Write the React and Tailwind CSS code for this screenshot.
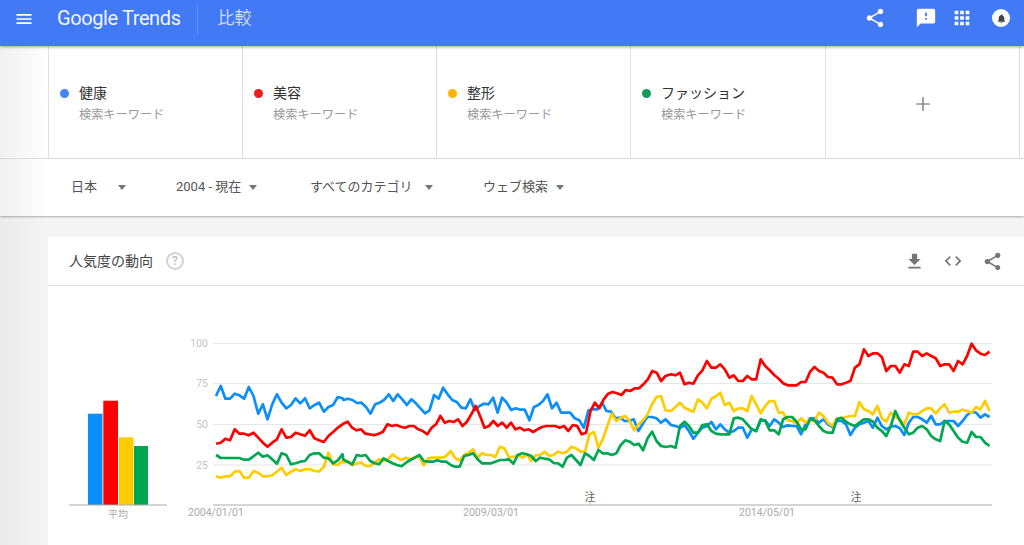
import React from "react";
import { Plus } from "lucide-react";

const FONT = "font-['Roboto','Noto_Sans_CJK_JP',sans-serif]";

// Material icon paths
const ICONS = {
  share: "M18 16.08c-.76 0-1.44.3-1.96.77L8.91 12.7c.05-.23.09-.46.09-.7s-.04-.47-.09-.7l7.05-4.11c.54.5 1.25.81 2.04.81 1.66 0 3-1.34 3-3s-1.34-3-3-3-3 1.34-3 3c0 .24.04.47.09.7L8.04 9.81C7.5 9.31 6.79 9 6 9c-1.66 0-3 1.34-3 3s1.34 3 3 3c.79 0 1.5-.31 2.04-.81l7.12 4.16c-.05.21-.08.43-.08.65 0 1.61 1.31 2.92 2.92 2.92 1.61 0 2.92-1.31 2.92-2.92s-1.31-2.92-2.92-2.92z",
  feedback: "M20 2H4c-1.1 0-1.99.9-1.99 2L2 22l4-4h14c1.1 0 2-.9 2-2V4c0-1.1-.9-2-2-2zm-7 12h-2v-2h2v2zm0-4h-2V6h2v4z",
  apps: "M4 8h4V4H4v4zm6 12h4v-4h-4v4zm-6 0h4v-4H4v4zm0-6h4v-4H4v4zm6 0h4v-4h-4v4zm6-10v4h4V4h-4zm-6 4h4V4h-4v4zm6 6h4v-4h-4v4zm0 6h4v-4h-4v4z",
  bell: "M12 22c1.1 0 2-.9 2-2h-4c0 1.1.89 2 2 2zm6-6v-5c0-3.07-1.64-5.64-4.5-6.32V4c0-.83-.67-1.5-1.5-1.5s-1.5.67-1.5 1.5v.68C7.63 5.36 6 7.92 6 11v5l-2 2v1h16v-1l-2-2z",
  menu: "M3 18h18v-2H3v2zm0-5h18v-2H3v2zm0-7v2h18V6H3z",
  download: "M19 9h-4V3H9v6H5l7 7 7-7zM5 18v2h14v-2H5z",
  code: "M9.4 16.6L4.8 12l4.6-4.6L8 6l-6 6 6 6 1.4-1.4zm5.2 0l4.6-4.6-4.6-4.6L16 6l6 6-6 6-1.4-1.4z",
};

const Icon = ({ name, className }) => (
  <svg viewBox="0 0 24 24" fill="currentColor" className={className}>
    <path d={ICONS[name]} />
  </svg>
);

// y values were read off 3x crops, three panels per series (y = 330 + v / 3)
const PANELS = [
  [216, 342.5],
  [343.3, 665.5],
  [671, 989.5],
];

const SERIES = [
  {
    color: "#0a8ffa",
    data: [
      [195,165,203,203,188,193,203,168,195,248,220,265,220,190,215,232,222,202,217,202,232,222,215,242,228,222,198,202],
      [207,203,207,216,215,228,248,220,215,207,190,210,190,205,222,205,217,232,247,238,192,203,170,190,207,213,230,232,205,238,225,218,220,200,245,200,215,237,232,236,236,268,228,222,210,190,232,215,245,245,245,262,268,290,238,235,235,215,240,242,262,260,270,270,265,300,278,258,258,262,275,265],
      [282,285,290,283,300,323,305,290,285,273,295,280,295,305,300,290,290,320,295,300,268,268,285,265,275,288,283,285,285,310,280,262,262,275,265,280,288,270,270,280,312,290,280,275,270,290,260,285,295,287,285,292,312,275,258,258,265,275,255,280,280,270,270,270,285,270,252,243,245,260,250,258],
    ],
  },
  {
    color: "#ff0000",
    data: [
      [338,335,323,328,295,308,308,313,305,320,335,347,335,325,295,320,318,305,310,314,298,322,328,333,315,303,290,280],
      [278,272,290,298,295,308,310,313,308,302,280,285,282,287,290,285,285,295,300,310,290,280,255,275,270,273,265,285,272,250,225,255,290,285,270,285,275,290,275,295,290,298,295,303,295,288,285,285,285,290,285,300,282,285,310,305,240,215,232,205,188,183,187,192,177,180,172,172,160,145,120,125,150,135],
      [130,133,125,160,155,158,133,118,90,110,110,100,115,140,133,150,150,135,145,145,85,105,118,132,143,157,163,163,163,153,153,122,108,120,125,138,140,160,160,155,150,110,100,55,75,67,67,78,120,105,105,125,100,105,62,62,75,67,75,82,105,100,100,120,90,100,75,38,58,68,72,62],
    ],
  },
  {
    color: "#ffcc00",
    data: [
      [436,440,436,436,422,420,440,441,420,425,436,436,433,422,410,432,422,415,420,415,414,420,421,408,365,400,402,390],
      [395,390,403,397,395,405,405,395,385,390,385,370,380,387,380,385,378,378,403,382,380,380,380,375,360,382,388,372,365,355,380,367,372,372,378,347,352,378,378,372,380,370,390,373,372,362,375,372,362,367,362,347,352,362,362,310,303,350,325,285,248,270,260,255,270,298,280,268,250,220,198,195,238],
      [240,228,215,230,236,242,205,215,232,203,196,185,222,215,240,232,232,240,195,220,247,225,210,210,245,245,268,270,278,262,275,265,270,245,255,275,285,262,262,258,255,255,213,235,240,250,225,262,272,245,258,265,280,245,250,250,240,232,232,247,232,220,245,242,242,236,240,245,228,235,210,240],
    ],
  },
  {
    color: "#00a650",
    data: [
      [372,381,381,381,381,381,386,386,376,365,377,373,385,398,367,372,400,397,392,390,372,367,367,380,382,397,388,370],
      [385,393,400,372,375,372,390,397,400,382,390,397,402,406,395,387,380,372,390,392,392,388,392,392,402,407,407,375,372,367,385,397,397,397,392,387,387,385,398,372,367,370,375,390,380,383,385,396,397,407,380,372,387,402,367,375,387,357,367,367,372,367,342,328,332,342,338,358,322,302,330,345,348],
      [345,350,285,272,285,305,305,282,280,300,308,310,310,310,262,260,265,280,295,300,265,270,298,298,310,265,258,258,272,295,295,265,268,285,300,305,305,265,260,272,280,285,275,265,265,272,290,300,315,285,240,268,290,310,305,290,285,295,315,325,330,270,280,300,320,332,335,303,318,318,335,345],
    ],
  },
];

const toPoints = (panels) =>
  panels
    .flatMap((ys, p) => {
      const [x0, x1] = PANELS[p];
      return ys.map((v, i) => {
        const x = x0 + ((x1 - x0) * i) / (ys.length - 1);
        return `${x.toFixed(1)},${(330 + v / 3).toFixed(1)}`;
      });
    })
    .join(" ");

const TERMS = [
  { name: "健康", dot: "bg-[#4285f4]", w: "w-[194px]" },
  { name: "美容", dot: "bg-[#ea1c1c]", w: "w-[194px]" },
  { name: "整形", dot: "bg-[#fbb400]", w: "w-[194px]" },
  { name: "ファッション", dot: "bg-[#0f9d58]", w: "w-[195px]" },
];

const FILTERS = [
  { label: "日本", w: "w-[105px]", gap: "ml-[21px]" },
  { label: "2004 - 現在", w: "w-[134px]", gap: "ml-[8px]" },
  { label: "すべてのカテゴリ", w: "w-[173px]", gap: "ml-[12px]" },
  { label: "ウェブ検索", w: "", gap: "ml-[8px]" },
];

const Header = () => (
  <header className="relative z-20 flex h-[46px] items-center bg-[#4279f5] text-white shadow-[0_1px_3px_rgba(0,0,0,0.35)]">
    <Icon name="menu" className="ml-[14px] h-5 w-5 -translate-y-[4px]" />
    <span className="ml-[23px] -translate-y-[5px] text-[20px] font-normal tracking-[-0.4px] text-white/95">Google Trends</span>
    <div className="ml-[16px] h-[29px] w-px -translate-y-[4px] bg-white/20" />
    <span className="ml-[20px] -translate-y-[4px] text-[17px] text-white/75">比較</span>
    <div className="ml-auto flex -translate-y-[5px] items-center pr-[14px]">
      <Icon name="share" className="h-[22px] w-[22px]" />
      <Icon name="feedback" className="ml-[29px] h-[22px] w-[22px]" />
      <Icon name="apps" className="ml-[14px] h-[22px] w-[22px]" />
      <div className="ml-[19px] flex h-[18px] w-[18px] items-center justify-center rounded-full bg-white">
        <Icon name="bell" className="h-[11px] w-[11px] text-[#444]" />
      </div>
    </div>
  </header>
);

const TermsRow = () => (
  <div className="flex h-[113px] border-b border-[#e0e0e0] bg-linear-to-r from-[#f1f1f1] to-white to-[48px] pl-[48px]">
    {TERMS.map((t) => (
      <div key={t.name} className={`flex ${t.w} flex-col border-l border-[#e0e0e0] bg-white pl-[11px] pt-[37px]`}>
        <div className="flex items-center gap-[10px] leading-[20px] text-[14px] text-[#333]">
          <span className={`h-[9px] w-[9px] rounded-full ${t.dot}`} />
          {t.name}
        </div>
        <div className="mt-[3px] pl-[19px] text-[12.2px] leading-[18px] text-[#999]">検索キーワード</div>
      </div>
    ))}
    <div className="flex w-[195px] items-center justify-center border-x border-[#e0e0e0] bg-white pt-[3px]">
      <Plus className="h-[22px] w-[22px] text-[#666]" strokeWidth={1.3} />
    </div>
    <div className="flex-1 bg-white" />
  </div>
);

const FiltersRow = () => (
  <div className="relative z-10 flex h-[57px] items-center bg-linear-to-r from-[#f1f1f1] to-white to-[48px] pb-[1px] pl-[71px] text-[13px] text-[#555] shadow-[0_1px_2px_rgba(0,0,0,0.3)]">
    {FILTERS.map((f) => (
      <div key={f.label} className={`flex items-center ${f.w}`}>
        <span>{f.label}</span>
        <span className={`${f.gap} h-0 w-0 border-x-[4px] border-t-[5px] border-x-transparent border-t-[#757575]`} />
      </div>
    ))}
  </div>
);

const BarChart = () => (
  <svg width="119" height="215" viewBox="69 330 119 215" className="shrink-0">
    <rect x="88" y="412.7" width="14.5" height="91.3" fill="#0a8ffa" />
    <rect x="103.3" y="399.7" width="14.7" height="104.3" fill="#ff0000" />
    <rect x="119" y="436.3" width="14.5" height="67.7" fill="#ffcc00" />
    <rect x="134" y="445" width="14" height="59" fill="#00a650" />
    <line x1="69" x2="167" y1="504" y2="504" stroke="#aaaaaa" />
    <text x="118" y="517" textAnchor="middle" fontSize="10" fill="#aaaaaa">平均</text>
  </svg>
);

const LineChart = () => (
  <svg width="804" height="215" viewBox="188 330 804 215" className="shrink-0">
    {[[100, 342.5], [75, 382.5], [50, 423.5], [25, 464]].map(([label, y]) => (
      <g key={label}>
        <line x1="213" x2="992" y1={y} y2={y} stroke="#e6e6e6" strokeWidth="1.2" />
        <text x="208" y={y + 3.5} textAnchor="end" fontSize="10.5" fill="#c4c4c4">{label}</text>
      </g>
    ))}
    <line x1="213" x2="992" y1="504" y2="504" stroke="#aaaaaa" />
    {SERIES.map((s) => (
      <polyline key={s.color} points={toPoints(s.data)} fill="none" stroke={s.color} strokeWidth="2.7" strokeLinejoin="round" />
    ))}
    {[590, 856].map((x) => (
      <g key={x}>
        <line x1={x} x2={x} y1="500" y2="504" stroke="#bbbbbb" />
        <text x={x} y="500" textAnchor="middle" fontSize="11" fill="#666666">注</text>
      </g>
    ))}
    <text x="188" y="515" fontSize="10.5" fill="#aaaaaa">2004/01/01</text>
    <text x="491" y="515" textAnchor="middle" fontSize="10.5" fill="#aaaaaa">2009/03/01</text>
    <text x="767" y="515" textAnchor="middle" fontSize="10.5" fill="#aaaaaa">2014/05/01</text>
  </svg>
);

const TrendCard = () => (
  <section className="ml-[48px] mt-[21px] h-[400px] bg-white">
    <div className="flex h-[49px] items-center border-b border-[#e4e4e4] pl-[21px] pr-[21px]">
      <span className="text-[14px] text-[#444]">人気度の動向</span>
      <span className="ml-[13px] flex h-[18px] w-[18px] items-center justify-center rounded-full border-2 border-[#d2d2d2] text-[12px] font-medium text-[#bdbdbd]">?</span>
      <div className="ml-auto flex items-center text-[#757575]">
        <Icon name="download" className="h-[21px] w-[21px]" />
        <Icon name="code" className="ml-[18px] h-[20px] w-[20px]" />
        <Icon name="share" className="ml-[19px] h-[21px] w-[21px]" />
      </div>
    </div>
    <div className={`flex pl-[21px] pt-[45px] ${FONT}`}>
      <BarChart />
      <LineChart />
    </div>
  </section>
);

export default function App() {
  return (
    <div className={`h-[545px] w-[1024px] overflow-hidden bg-linear-to-r from-[#ebebeb] to-[#f5f5f5] to-[48px] ${FONT}`}>
      <Header />
      <TermsRow />
      <FiltersRow />
      <TrendCard />
    </div>
  );
}
